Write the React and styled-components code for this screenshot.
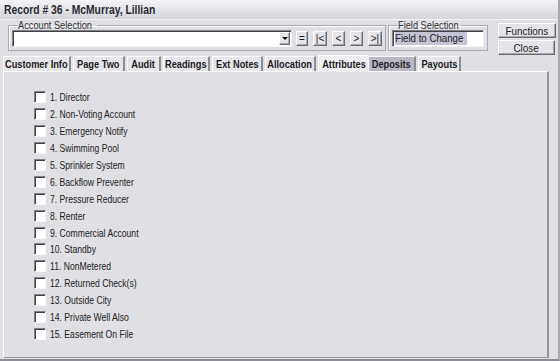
import React from 'react'
import styled, { createGlobalStyle } from 'styled-components'

const Global = createGlobalStyle`
  html, body { margin: 0; padding: 0; background: #dfdfe4; }
  body { font-family: 'Liberation Sans', Arial, sans-serif; }
`

const Window = styled.div`
  width: 560px;
  height: 361px;
  box-sizing: border-box;
  background: #dfdfe4;
  display: flex;
  flex-direction: column;
  border-right: 2px solid #a8a8b0;
  border-bottom: 2px solid #8c8c96;
  overflow: hidden;
`

/* narrows the Arial-width font toward the old MS Sans Serif / Tahoma look */
const Squeeze = styled.span`
  display: inline-block;
  white-space: nowrap;
  transform: scaleX(${p => p.k || 0.85});
  transform-origin: ${p => p.origin || 'left'} center;
`

const TitleBar = styled.div`
  height: 19px;
  flex: none;
  display: flex;
  align-items: center;
  padding-left: 4px;
  font-size: 12px;
  font-weight: bold;
  color: #2a2a30;
  background: linear-gradient(#f4f4f8, #d4d4dc);
  border-bottom: 1px solid #f4f4f8;
`

const TopRow = styled.div`
  display: flex;
  align-items: flex-start;
  height: 34px;
  padding: 0 0 0 8px;
  gap: 2px;
`

const Group = styled.fieldset`
  margin: 0;
  padding: 0 3px 3px 3px;
  margin-top: 1px;
  width: ${p => p.w}px;
  height: 30px;
  box-sizing: border-box;
  border: 1px solid #a9a9b1;
  box-shadow: 1px 1px 0 #fff inset;
  display: flex;
  align-items: center;
  gap: 5px;
`

const Legend = styled.legend`
  font-size: 10.5px;
  color: #333;
  padding: 0 1px;
  margin-left: 5px;
  line-height: 9px;
  width: ${p => p.w}px;
`

const Input = styled.div`
  flex: 1;
  height: 17px;
  box-sizing: border-box;
  background: #fff;
  border-top: 1px solid #808088;
  border-left: 1px solid #808088;
  border-right: 1px solid #f4f4f8;
  border-bottom: 1px solid #f4f4f8;
  box-shadow: 1px 1px 0 #404048 inset;
  display: flex;
  align-items: center;
  justify-content: flex-end;
  font-size: 11px;
  padding: 1px;
  margin-right: ${p => p.mr || 0}px;
`

const Selected = styled.span`
  margin-right: auto;
  margin-left: 1px;
  width: 72px;
  background: #c4c4d4;
  color: #1a1a24;
  font-size: 11px;
  line-height: 13px;
`

const Btn = styled.div`
  flex: none;
  width: ${p => p.w}px;
  height: ${p => p.h || 15}px;
  box-sizing: border-box;
  background: #e4e4e9;
  border-top: 1px solid #fff;
  border-left: 1px solid #fff;
  border-right: 1px solid #6a6a72;
  border-bottom: 1px solid #6a6a72;
  box-shadow: -1px -1px 0 #a8a8b0 inset;
  display: flex;
  align-items: center;
  justify-content: center;
  font-size: ${p => p.fs || 9}px;
  color: #222;
`

const Arrow = styled.span`
  width: 0;
  height: 0;
  border-left: 3px solid transparent;
  border-right: 3px solid transparent;
  border-top: 3px solid #111;
`

const ButtonCol = styled.div`
  display: flex;
  flex-direction: column;
  gap: 2px;
  margin-left: 8px;
  margin-top: 3px;
`

const Tabs = styled.div`
  display: flex;
  align-items: flex-end;
  height: 16px;
  padding-left: 3px;
  margin-top: 1px;
`

const Tab = styled.div`
  width: ${p => p.w}px;
  height: ${p => (p.active ? 17 : 15)}px;
  box-sizing: border-box;
  margin-right: ${p => (p.active ? 0 : 2)}px;
  display: flex;
  align-items: center;
  justify-content: center;
  font-size: 11px;
  font-weight: bold;
  color: #1c1c22;
  background: ${p => (p.active ? '#eeeef1' : p.dark ? '#b9b9c6' : '#e6e6ea')};
  border-top: 1px solid #fff;
  border-left: 1px solid #fff;
  border-right: ${p => (p.active ? 'none' : '2px solid #8c8c94')};
  margin-bottom: ${p => (p.active ? -1 : 0)}px;
  position: relative;
  z-index: ${p => (p.active ? 2 : 1)};
`

const Panel = styled.div`
  flex: 1;
  width: 546px;
  margin-left: 3px;
  margin-bottom: 1px;
  box-sizing: border-box;
  border-top: 1px solid #fff;
  border-left: 1px solid #fff;
  border-right: 2px solid #96969e;
  border-bottom: 1px solid #96969e;
  padding: 17px 0 0 30px;
  display: flex;
  flex-direction: column;
`

const Row = styled.label`
  display: flex;
  align-items: center;
  height: 16.9px;
  gap: 4px;
  font-size: 10.5px;
  color: #222;
`

const Box = styled.span`
  flex: none;
  width: 12px;
  height: 12px;
  box-sizing: border-box;
  background: #fff;
  border-top: 1px solid #808088;
  border-left: 1px solid #808088;
  border-right: 1px solid #f8f8fa;
  border-bottom: 1px solid #f8f8fa;
  box-shadow: 1px 1px 0 #404048 inset;
`

const tabs = [
  ['Customer Info', 68],
  ['Page Two', 52],
  ['Audit', 34],
  ['Readings', 47],
  ['Ext Notes', 51],
  ['Allocation', 51],
  ['Attributes', 50, true],
  ['Deposits', 48, false, true],
  ['Payouts', 43],
]

const attributes = [
  '1. Director',
  '2. Non-Voting Account',
  '3. Emergency Notify',
  '4. Swimming Pool',
  '5. Sprinkler System',
  '6. Backflow Preventer',
  '7. Pressure Reducer',
  '8. Renter',
  '9. Commercial Account',
  '10. Standby',
  '11. NonMetered',
  '12. Returned Check(s)',
  '13. Outside City',
  '14. Private Well Also',
  '15. Easement On File',
]

export default function App() {
  return (
    <Window>
      <Global />
      <TitleBar><Squeeze k={0.86}>Record # 36 - McMurray, Lillian</Squeeze></TitleBar>
      <TopRow>
        <Group w={378}>
          <Legend w={78}><Squeeze k={0.88}>Account Selection</Squeeze></Legend>
          <Input mr={-1}>
            <Btn w={11} h={13}><Arrow /></Btn>
          </Input>
          <Btn w={12} fs={10}>=</Btn>
          <Btn w={14} fs={10}>|&lt;</Btn>
          <Btn w={13} fs={10}>&lt;</Btn>
          <Btn w={13} fs={10}>&gt;</Btn>
          <Btn w={14} fs={10}>&gt;|</Btn>
        </Group>
        <Group w={100}>
          <Legend w={62}><Squeeze k={0.88}>Field Selection</Squeeze></Legend>
          <Input>
            <Selected><Squeeze k={0.88}>Field to Change</Squeeze></Selected>
          </Input>
        </Group>
        <ButtonCol>
          <Btn w={58} fs={11}><Squeeze k={0.9} origin="center">Functions</Squeeze></Btn>
          <Btn w={57} fs={11}><Squeeze k={0.9} origin="center">Close</Squeeze></Btn>
        </ButtonCol>
      </TopRow>
      <Tabs>
        {tabs.map(([t, w, active, dark]) => (
          <Tab key={t} w={w} active={active} dark={dark}>
            <Squeeze k={0.84} origin="center">{t}</Squeeze>
          </Tab>
        ))}
      </Tabs>
      <Panel>
        {attributes.map(a => (
          <Row key={a}>
            <Box />
            <Squeeze k={0.82}>{a}</Squeeze>
          </Row>
        ))}
      </Panel>
    </Window>
  )
}
